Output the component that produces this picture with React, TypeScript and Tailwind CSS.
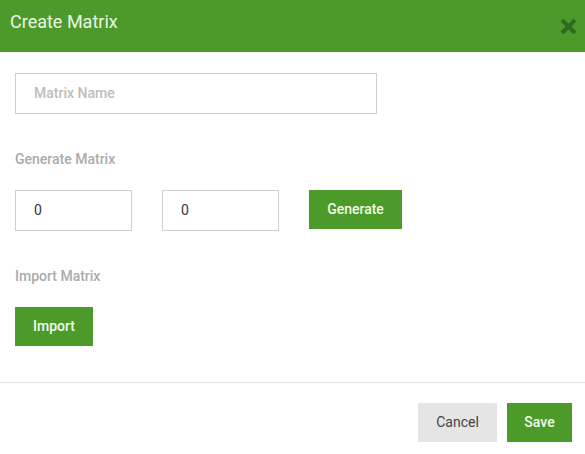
import React from "react";

export default function App() {
  return (
    <div className="w-[585px] h-[454px] bg-white flex flex-col" style={{ fontFamily: "Roboto, 'Noto Sans', sans-serif" }}>
      <div className="h-[52px] bg-[#4c9b2a] flex items-start justify-between pl-[10px] pr-[7px]">
        <div className="mt-[10px] text-[18px] leading-[24px] text-[#eaf6e3]">Create Matrix</div>
        <svg className="mt-[18px]" width="19" height="17" viewBox="0 0 19 17">
          <path d="M3 2 L16 15 M16 2 L3 15" stroke="#2f6b1f" strokeWidth="4" strokeLinecap="butt" />
        </svg>
      </div>
      <div className="flex flex-col px-[15px] pt-[21px]">
        <div className="w-[362px] h-[41px] border border-[#cfcfcf] flex items-center pl-[18px] text-[14px] font-medium text-[#bdbdbd]">
          Matrix Name
        </div>
        <div className="mt-[35px] h-[20px] leading-[20px] text-[14px] font-medium text-[#ababab]">Generate Matrix</div>
        <div className="mt-[21px] flex items-start">
          <div className="w-[117px] h-[41px] border border-[#cfcfcf] flex items-center pl-[18px] text-[14px] text-[#333]">0</div>
          <div className="ml-[30px] w-[117px] h-[41px] border border-[#cfcfcf] flex items-center pl-[18px] text-[14px] text-[#333]">0</div>
          <div className="ml-[30px] w-[93px] h-[39px] bg-[#4c9b2a] flex items-center justify-center text-[14px] font-medium text-[#f0fae9]">Generate</div>
        </div>
        <div className="mt-[35px] h-[20px] leading-[20px] text-[14px] font-medium text-[#ababab]">Import Matrix</div>
        <div className="mt-[21px] w-[78px] h-[39px] bg-[#4c9b2a] flex items-center justify-center text-[14px] font-medium text-[#f0fae9]">Import</div>
      </div>
      <div className="mt-[36px] h-px bg-[#dedede]" />
      <div className="flex justify-end gap-[10px] pr-[13px] pt-[20px]">
        <div className="w-[79px] h-[39px] bg-[#e5e5e5] flex items-center justify-center text-[14px] text-[#444]">Cancel</div>
        <div className="w-[65px] h-[39px] bg-[#4c9b2a] flex items-center justify-center text-[14px] font-medium text-[#f0fae9]">Save</div>
      </div>
    </div>
  );
}
